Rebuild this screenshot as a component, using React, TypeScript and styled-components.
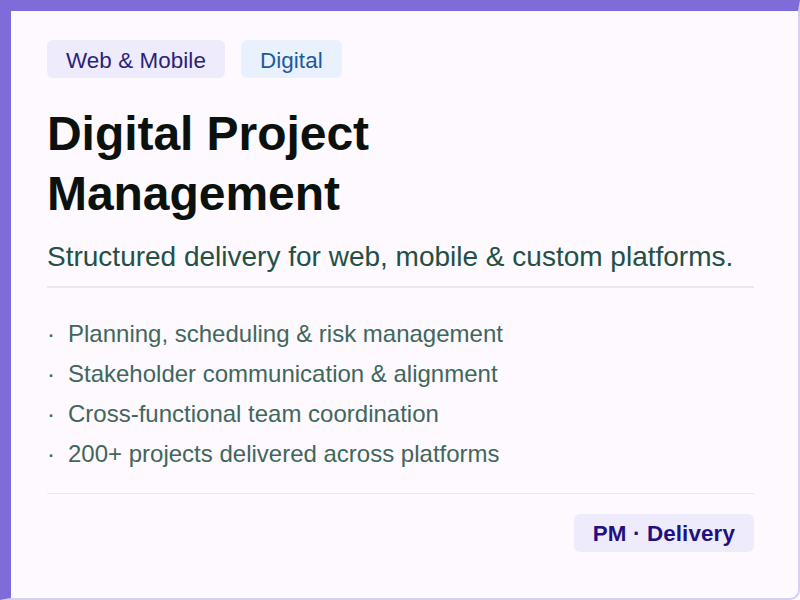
import styled, { createGlobalStyle } from 'styled-components';

const Global = createGlobalStyle`
  html, body {
    margin: 0;
    padding: 0;
    background: #fdf9ff;
  }
`;

const Card = styled.div`
  box-sizing: border-box;
  width: 800px;
  height: 600px;
  overflow: hidden;
  padding: 29px 44px 0 36px;
  background: #fdf9ff;
  border-style: solid;
  border-color: #d6cff0;
  border-width: 11px 2px 2px 11px;
  border-top-color: #806cd9;
  border-left-color: #806cd9;
  border-bottom-right-radius: 10px;
  font-family: "Liberation Sans", Arial, sans-serif;
`;

const Tags = styled.div`
  display: flex;
  gap: 16px;
`;

const Tag = styled.span<{ $blue?: boolean }>`
  height: 38px;
  line-height: 41px;
  padding: 0 19px;
  border-radius: 6px;
  font-size: 22.4px;
  letter-spacing: 0.08px;
  background: ${p => (p.$blue ? '#e8f1fd' : '#eeebfd')};
  color: ${p => (p.$blue ? '#1c5a9e' : '#2c1f78')};
`;

const Title = styled.h1`
  margin: 26px 0 0;
  font-size: 48px;
  line-height: 60px;
  font-weight: 700;
  letter-spacing: -0.05px;
  color: #0b120d;
`;

const Subtitle = styled.p`
  margin: 15px 0 0;
  font-size: 28px;
  line-height: 36px;
  color: #235044;
`;

const Rule = styled.hr`
  margin: 0;
  border: 0;
  height: 1px;
  background: #ebe6f2;
`;

const SubRule = styled(Rule)`
  margin-top: 11px;
  height: 2px;
`;

const List = styled.ul`
  list-style: none;
  margin: 32px 0 25px;
  padding: 0;
  display: flex;
  flex-direction: column;
  gap: 12px;
`;

const Item = styled.li`
  display: flex;
  gap: 16px;
  font-size: 24px;
  line-height: 28px;
  color: #3f675b;
`;

const Dot = styled.span`
  width: 5px;
`;

const Footer = styled.div`
  display: flex;
  justify-content: flex-end;
  margin-top: 20px;
`;

const Badge = styled.span`
  height: 38px;
  line-height: 40px;
  padding: 0 19px;
  border-radius: 6px;
  background: #eeebfd;
  color: #22107e;
  font-size: 22.4px;
  font-weight: 700;
  letter-spacing: 0.12px;
`;

const points = [
  'Planning, scheduling & risk management',
  'Stakeholder communication & alignment',
  'Cross-functional team coordination',
  '200+ projects delivered across platforms',
];

export default function App() {
  return (
    <Card>
      <Global />
      <Tags>
        <Tag>Web &amp; Mobile</Tag>
        <Tag $blue>Digital</Tag>
      </Tags>
      <Title>Digital Project<br />Management</Title>
      <Subtitle>Structured delivery for web, mobile &amp; custom platforms.</Subtitle>
      <SubRule />
      <List>
        {points.map(p => (
          <Item key={p}><Dot>·</Dot>{p}</Item>
        ))}
      </List>
      <Rule />
      <Footer>
        <Badge>PM · Delivery</Badge>
      </Footer>
    </Card>
  );
}
